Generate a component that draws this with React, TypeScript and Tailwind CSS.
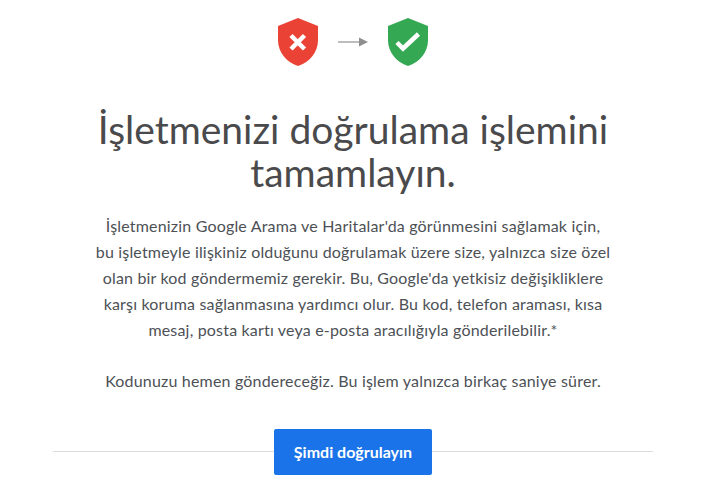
const font = "font-['Lato','Noto_Sans',sans-serif]";

function BadShield() {
  return (
    <svg width="40" height="48" viewBox="0 0 40 48" aria-hidden="true">
      <path d="M20 0 L40 8 V22 C40 34 32 44 20 48 C8 44 0 34 0 22 V8 Z" fill="#ea4335" />
      <path d="M13 17.5 L26.5 31 M26.5 17.5 L13 31" stroke="#fff" strokeWidth="4.5" fill="none" />
    </svg>
  );
}

function GoodShield() {
  return (
    <svg width="40" height="48" viewBox="0 0 40 48" aria-hidden="true">
      <path d="M20 0 L40 8 V22 C40 34 32 44 20 48 C8 44 0 34 0 22 V8 Z" fill="#34a853" />
      <path d="M9 24.5 L15 30.5 L30.5 16" stroke="#fff" strokeWidth="4.5" fill="none" />
    </svg>
  );
}

function Arrow() {
  return (
    <svg width="30" height="10" viewBox="0 0 30 10" aria-hidden="true">
      <rect x="0" y="4" width="22" height="2" fill="#bdbdbd" />
      <path d="M21 0.5 L30 5 L21 9.5 Z" fill="#8f8f8f" />
    </svg>
  );
}

export default function App() {
  return (
    <div className={`h-[492px] w-[724px] overflow-hidden bg-white ${font}`}>
      <main className="ml-[53px] flex w-[600px] flex-col items-center pt-[18px]">
        <div className="flex items-center gap-5">
          <BadShield />
          <Arrow />
          <GoodShield />
        </div>

        <h1 className="mt-[42px] w-[540px] text-center text-[39px] leading-[43px] font-normal text-[#4a4a4c]">
          İşletmenizi doğrulama işlemini tamamlayın.
        </h1>

        <div className="mt-[19px] w-[560px] text-center text-base leading-[26px] tracking-[0.18px] text-[#4d5156]">
          <p>
            İşletmenizin Google Arama ve Haritalar'da görünmesini sağlamak için,
            <br />
            bu işletmeyle ilişkiniz olduğunu doğrulamak üzere size, yalnızca size özel
            <br />
            olan bir kod göndermemiz gerekir. Bu, Google'da yetkisiz değişikliklere
            <br />
            karşı koruma sağlanmasına yardımcı olur. Bu kod, telefon araması, kısa
            <br />
            mesaj, posta kartı veya e-posta aracılığıyla gönderilebilir.*
          </p>
          <p className="mt-[25px]">Kodunuzu hemen göndereceğiz. Bu işlem yalnızca birkaç saniye sürer.</p>
        </div>

        <div className="mt-[35px] flex w-full items-center">
          <div className="mb-px h-px flex-1 bg-[#dadce0]" />
          <button
            type="button"
            className="h-[46px] w-[158px] rounded-[2px] bg-[#1a73e8] text-base font-bold text-white"
          >
            Şimdi doğrulayın
          </button>
          <div className="mb-px h-px flex-1 bg-[#dadce0]" />
        </div>
      </main>
    </div>
  );
}
